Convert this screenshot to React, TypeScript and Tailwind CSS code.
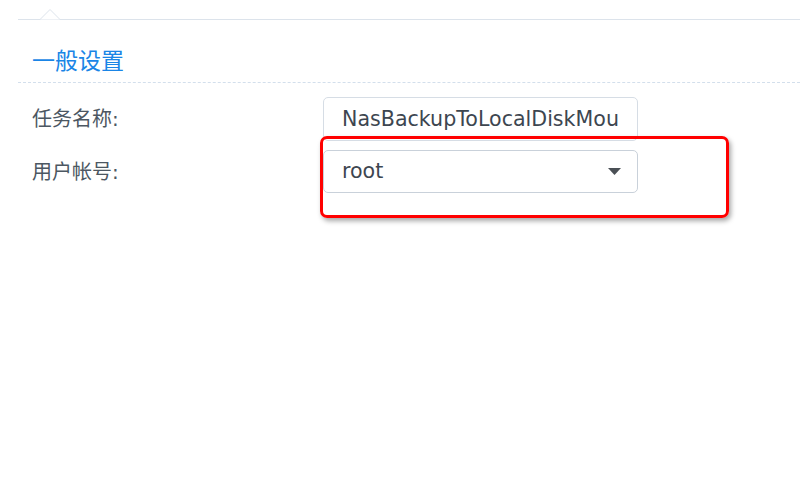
export default function App() {
  return (
    <div className="relative w-[800px] h-[500px] bg-white overflow-hidden" style={{ fontFamily: '"DejaVu Sans", "Noto Sans CJK SC", sans-serif' }}>
      {/* 顶部分隔线和小三角 */}
      <div className="relative ml-[18px] mt-[19px] h-px bg-[#dce3eb]">
        <svg className="absolute left-[22px] top-[-10px]" width="20" height="11" viewBox="0 0 20 11">
          <path d="M0 10.5 L10 0.5 L20 10.5" fill="white" stroke="#dce3eb" strokeWidth="1" />
        </svg>
      </div>

      <h2 className="ml-[32px] mt-[27px] text-[23px] leading-[28px] text-[#1a85e6]">一般设置</h2>

      <div className="ml-[18px] mt-[7px] border-t border-dashed border-[#d3dfec]" />

      <div className="mt-[14px] ml-[32px] flex flex-col gap-[9px]">
        <div className="flex items-center">
          <div className="w-[291px] text-[20px] text-[#4c5762]">任务名称:</div>
          <div className="w-[315px] h-[44px] border border-[#d6dde5] rounded-[5px] px-[18px] flex items-center text-[20.6px] text-[#3d4650] overflow-hidden whitespace-nowrap">
            NasBackupToLocalDiskMou
          </div>
        </div>
        <div className="flex items-center">
          <div className="w-[291px] text-[20px] text-[#4c5762]">用户帐号:</div>
          <div className="w-[315px] h-[43px] border border-[#c9d1da] rounded-[5px] pl-[18px] pr-[16px] flex items-center justify-between text-[20.6px] text-[#3d4650]">
            <span>root</span>
            <svg width="13" height="7" viewBox="0 0 13 7">
              <path d="M0 0 H13 L6.5 7 Z" fill="#4a4f55" />
            </svg>
          </div>
        </div>
      </div>

      {/* 红框标注 */}
      <div className="absolute left-[320px] top-[136px] w-[409px] h-[82px] border-[3px] border-[#ff0000] rounded-[7px] shadow-[2px_3px_5px_rgba(0,0,0,0.35)]" />
    </div>
  );
}
